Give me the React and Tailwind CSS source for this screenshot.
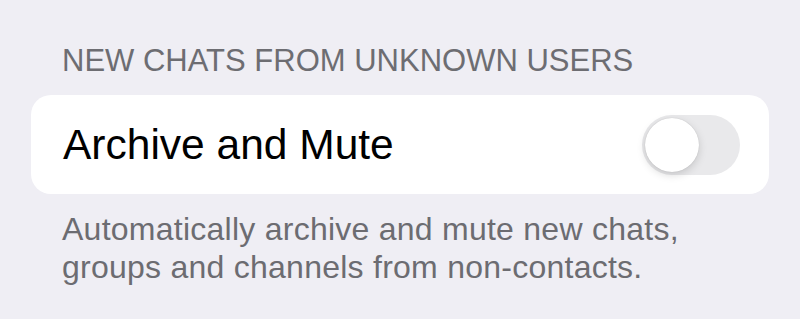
export default function App() {
  const font = { fontFamily: '"Liberation Sans", Arial, sans-serif' };

  return (
    <div
      className="w-[800px] h-[319px] bg-[#efeef4] px-[31px] pt-[43px] overflow-hidden"
      style={font}
    >
      {/* section header */}
      <div className="pl-[31px] text-[31px] leading-[36px] text-[#6d6d72] whitespace-nowrap">
        NEW CHATS FROM UNKNOWN USERS
      </div>

      {/* card */}
      <div className="mt-[16px] h-[99px] rounded-[20px] bg-white flex items-center justify-between pl-[32px] pr-[29px]">
        <span className="text-[42.5px] leading-[48px] text-black whitespace-nowrap">Archive and Mute</span>
        <Toggle />
      </div>

      {/* footer */}
      <p className="mt-[16px] pl-[31px] text-[32px] leading-[38px] tracking-[0.25px] text-[#6c6c71] whitespace-nowrap">
        Automatically archive and mute new chats,
        <br />
        groups and channels from non-contacts.
      </p>
    </div>
  );
}

function Toggle() {
  return (
    <div className="w-[98px] h-[60px] rounded-full bg-[#e9e9eb] flex items-center px-[3px]">
      <div className="w-[54px] h-[54px] rounded-full bg-white shadow-[0_3px_8px_rgba(0,0,0,0.15),0_0_1px_rgba(0,0,0,0.2)]" />
    </div>
  );
}
